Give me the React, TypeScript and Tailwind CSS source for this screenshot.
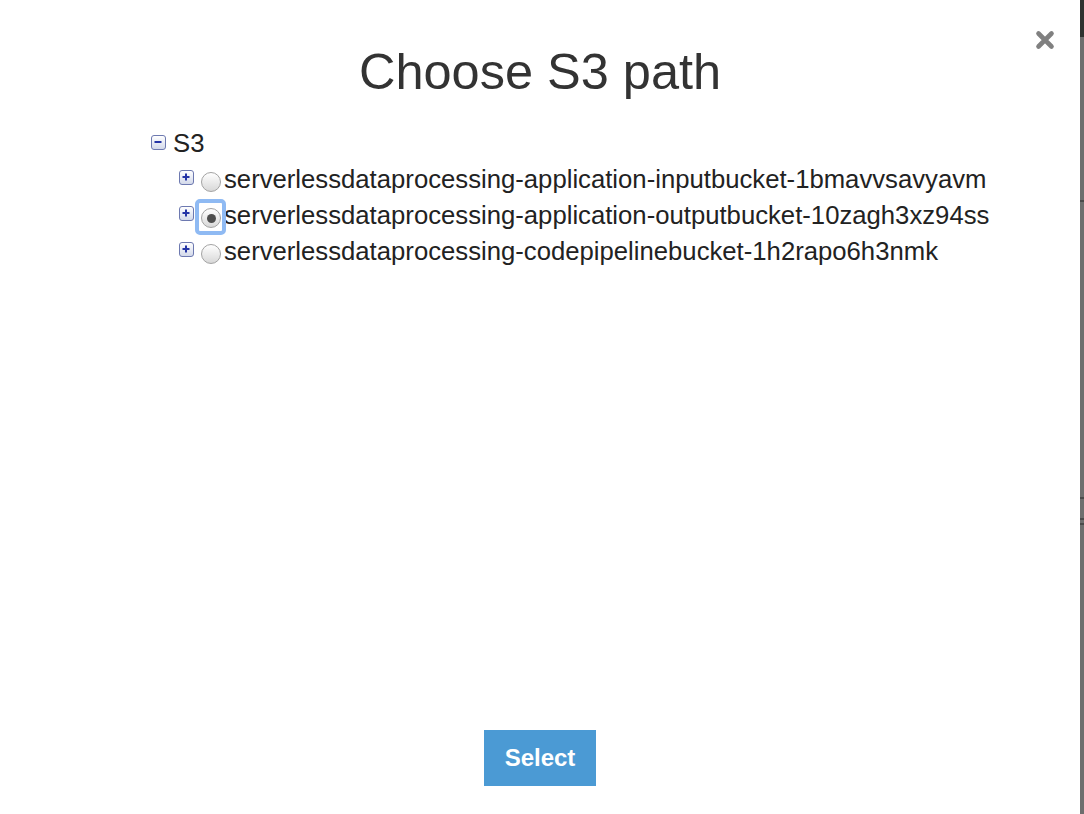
import React, { useState } from 'react';

type Bucket = { name: string };

const buckets: Bucket[] = [
  { name: 'serverlessdataprocessing-application-inputbucket-1bmavvsavyavm' },
  { name: 'serverlessdataprocessing-application-outputbucket-10zagh3xz94ss' },
  { name: 'serverlessdataprocessing-codepipelinebucket-1h2rapo6h3nmk' },
];

const ToggleBox: React.FC<{ open?: boolean }> = ({ open }) => (
  <span className="block w-[15px] h-[15px] shrink-0 rounded-[3px] border-[1.5px] border-[#6d79b0] bg-gradient-to-b from-white to-[#d3d9ea]">
    <svg viewBox="0 0 12 12" className="w-[12px] h-[12px]">
      <path d="M2.5 6h7" stroke="#2434a6" strokeWidth={2} />
      {!open && <path d="M6 2.5v7" stroke="#2434a6" strokeWidth={2} />}
    </svg>
  </span>
);

const Radio: React.FC<{ checked: boolean; focused?: boolean; onClick: () => void }> = ({
  checked,
  focused,
  onClick,
}) => (
  <span className="relative block w-[20px] h-[20px] shrink-0 cursor-pointer" onClick={onClick}>
    {focused && (
      <span className="absolute left-[-6px] right-[-5px] top-[-9px] bottom-[-7px] rounded-[5px] border-[4px] border-[#8fbaf3]" />
    )}
    <span className="absolute inset-0 rounded-full border border-[#a3a3a3] bg-gradient-to-b from-white to-[#d8d8d8] flex items-center justify-center">
      {checked && <span className="block w-[9px] h-[9px] rounded-full bg-[#4e4e4e]" />}
    </span>
  </span>
);

export default function App() {
  const [selected, setSelected] = useState(1);

  return (
    <div className="w-full h-[814px] flex bg-white overflow-hidden" style={{ fontFamily: '"Liberation Sans", Arial, sans-serif' }}>
      <div className="relative w-[1080px] h-full flex flex-col bg-white">
        {/* close */}
        <button className="absolute left-[1035px] top-[30px] w-[20px] h-[20px]" title="Close">
          <svg viewBox="0 0 20 20" className="w-[20px] h-[20px]">
            <path d="M3.5 3.5l13 13M16.5 3.5l-13 13" stroke="#808080" strokeWidth={4.6} strokeLinecap="round" />
          </svg>
        </button>

        <h1 className="pt-[44px] text-center text-[50.5px] leading-[55px] text-[#333]">Choose S3 path</h1>

        {/* tree */}
        <div className="flex-1 pt-[26px] pl-[151px] text-[25.7px] leading-[36px] text-[#222]">
          <div className="flex items-start">
            <span className="mt-[10px]">
              <ToggleBox open />
            </span>
            <span className="ml-[7px]">S3</span>
          </div>
          <div className="pl-[28px]">
            {buckets.map((b, i) => (
              <div key={b.name} className="flex items-start">
                <span className="mt-[9px]">
                  <ToggleBox />
                </span>
                <span className="ml-[7px] mt-[11px]">
                  <Radio checked={selected === i} focused={i === 1} onClick={() => setSelected(i)} />
                </span>
                <span className="ml-[3px] whitespace-nowrap">{b.name}</span>
              </div>
            ))}
          </div>
        </div>

        <div className="flex justify-center pb-[28px]">
          <button className="w-[112px] h-[56px] bg-[#4b9ad4] text-white text-[24px] font-bold">Select</button>
        </div>
      </div>

      {/* backdrop edge */}
      <div className="w-[4px] h-full flex flex-col bg-[#6e6e6e]">
        <div className="h-[37px] bg-[#2e3230]" />
        <div className="h-[163px]" />
        <div className="h-[2px] bg-[#4a4a4a]" />
        <div className="h-[295px]" />
        <div className="h-[2px] bg-[#4a4a4a]" />
        <div className="h-[19px]" />
        <div className="h-[2px] bg-[#4a4a4a]" />
        <div className="h-[3px]" />
        <div className="h-[2px] bg-[#4a4a4a]" />
      </div>
    </div>
  );
}
